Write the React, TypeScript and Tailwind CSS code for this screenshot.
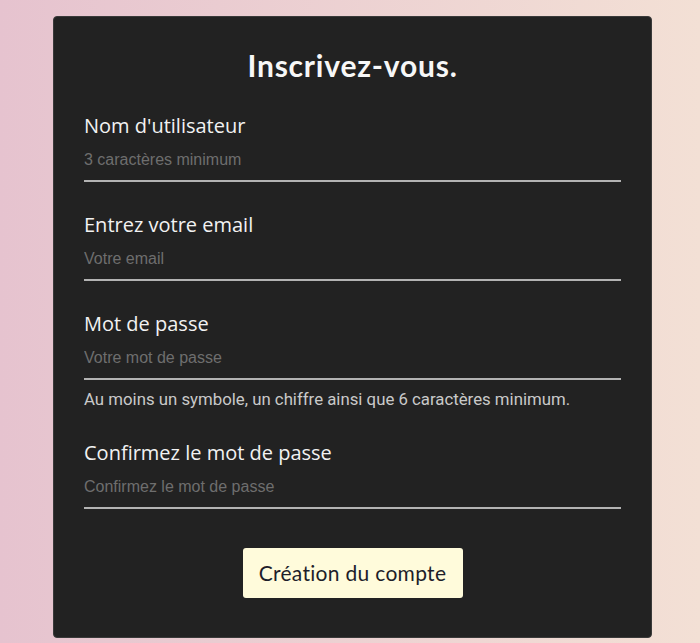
import React from "react";

const Field = ({ label, placeholder, help }: { label: string; placeholder: string; help?: string }) => (
  <div className="flex flex-col">
    <label className="text-[20px] leading-[26px] text-[#f2f2f2]" style={{ fontFamily: '"Open Sans", sans-serif' }}>
      {label}
    </label>
    <input
      placeholder={placeholder}
      className="h-[43px] bg-transparent border-b-2 border-[#b3b3b3] text-[16px] text-white placeholder:text-[#6e6e6e] outline-none pb-0"
      style={{ fontFamily: '"Liberation Sans", Arial, sans-serif' }}
    />
    {help && (
      <p className="mt-[9px] text-[16.8px] leading-[21px] text-[#c9c9c9]" style={{ fontFamily: 'Roboto, sans-serif' }}>
        {help}
      </p>
    )}
  </div>
);

export default function App() {
  return (
    <div className="min-h-[643px] w-full bg-gradient-to-r from-[#e6c3cf] to-[#f3e0d5] pt-[16px] pl-[53px]">
      <div className="w-[599px] h-[622px] bg-[#222222] rounded-[4px] border border-[#3a3a3a] pt-[32px] px-[30px] flex flex-col">
        <h1
          className="text-center text-[30px] leading-[32px] font-bold tracking-[0.8px] text-[#f7f7f7]"
          style={{ fontFamily: 'Lato, sans-serif' }}
        >
          Inscrivez-vous.
        </h1>
        <div className="mt-[32px] flex flex-col gap-[30px]">
          <Field label="Nom d'utilisateur" placeholder="3 caractères minimum" />
          <Field label="Entrez votre email" placeholder="Votre email" />
          <Field
            label="Mot de passe"
            placeholder="Votre mot de passe"
            help="Au moins un symbole, un chiffre ainsi que 6 caractères minimum."
          />
          <Field label="Confirmez le mot de passe" placeholder="Confirmez le mot de passe" />
        </div>
        <div className="mt-[39px] flex justify-center">
          <button
            className="w-[220px] h-[50px] bg-[#fffbdb] rounded-[3px] text-[21px] tracking-[0.3px] text-[#1e1e2a]"
            style={{ fontFamily: 'Lato, sans-serif' }}
          >
            Création du compte
          </button>
        </div>
      </div>
    </div>
  );
}
